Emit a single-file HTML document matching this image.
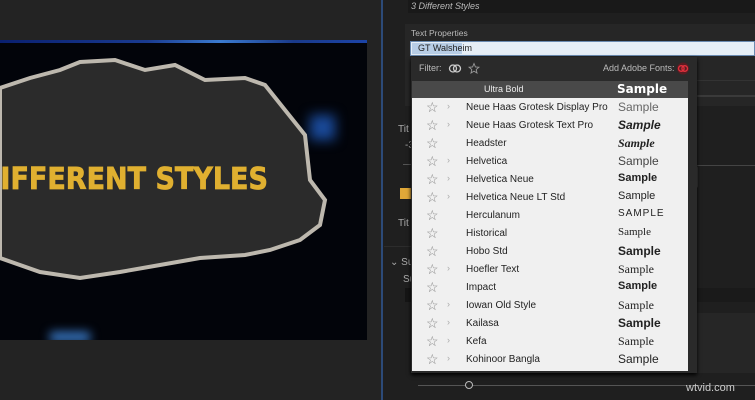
<!DOCTYPE html>
<html><head><style>
body{margin:0;width:755px;height:400px;overflow:hidden;background:#232323;font-family:"Liberation Sans",sans-serif;position:relative}
.a{position:absolute}
.row{position:absolute;left:0;width:276px;height:18px;font-size:10px;color:#222}
.row .st{position:absolute;left:14px;top:2px;font-size:14px;color:#888;line-height:14px}
.row .ch{position:absolute;left:35px;top:3px;color:#aaa;font-size:9px}
.row .nm{position:absolute;left:54px;top:4px}
.row .sm{position:absolute;left:206px;top:2px;font-size:12px;color:#222}
.g{color:#aaa;font-size:10px}
</style></head><body>
<div class="a" style="left:0;top:40px;width:367px;height:300px;background:#02040a;overflow:hidden">
 <div class="a" style="left:0;top:0;width:367px;height:3px;background:linear-gradient(90deg,#0a2070,#1a3b90 40%,#3b7bd0 60%,#1a3a8a 80%,#1c44a8)"></div>
 <div class="a" style="left:310px;top:75px;width:25px;height:25px;background:#1a4a9a;filter:blur(6px)"></div>
 <div class="a" style="left:50px;top:292px;width:40px;height:10px;background:#3a7ac8;filter:blur(5px)"></div>
 <svg class="a" style="left:0;top:0" width="367" height="300">
  <path d="M0,48 L30,38 L60,30 L80,22 L115,20 L145,30 L175,25 L205,40 L245,38 L265,45 L285,70 L305,95 L310,140 L325,160 L320,185 L300,200 L270,210 L245,215 L200,218 L160,225 L120,232 L80,238 L40,232 L0,218 Z" fill="#2b2b2b" stroke="#bdb8ae" stroke-width="4"/>
 </svg>
 <div class="a" style="left:-22px;top:122px;font-size:30px;font-weight:900;color:#e0b030;white-space:nowrap;font-family:'DejaVu Sans',sans-serif;transform:scaleX(0.9);transform-origin:left;-webkit-text-stroke:0.8px #e0b030">DIFFERENT STYLES</div>
</div>
<div class="a" style="left:381px;top:0;width:2px;height:400px;background:#2c4a78"></div>
<div class="a" style="left:383px;top:0;width:372px;height:400px;background:#1f1f1f"></div>
<div class="a" style="left:408px;top:0;width:347px;height:13px;background:#191919"></div>
<div class="a" style="left:411px;top:1px;font-size:9px;font-style:italic;color:#bbb">3 Different Styles</div>
<div class="a" style="left:405px;top:24px;width:350px;height:82px;background:#262626"></div>
<div class="a" style="left:411px;top:28px;font-size:8.5px;color:#bbb">Text Properties</div>
<div class="a" style="left:410px;top:41px;width:345px;height:15px;background:#e6eef6;border:1px solid #6a8ab0;box-sizing:border-box"></div>
<div class="a" style="left:412px;top:43px;width:50px;height:11px;background:#b7cde6"></div>
<div class="a" style="left:418px;top:43px;font-size:9px;color:#222">GT Walsheim</div>
<div class="a g" style="left:398px;top:124px">Tit</div>
<div class="a g" style="left:405px;top:140px">-3</div>
<div class="a" style="left:403px;top:164px;width:10px;height:1px;background:#555"></div>
<div class="a" style="left:400px;top:188px;width:12px;height:11px;background:#e0a838"></div>
<div class="a g" style="left:398px;top:218px">Tit</div>
<div class="a" style="left:384px;top:246px;width:30px;height:1px;background:#2c2c2c"></div>
<div class="a g" style="left:390px;top:257px">⌄ Su</div>
<div class="a g" style="left:403px;top:274px">Su</div>
<div class="a" style="left:405px;top:288px;width:10px;height:14px;background:#151515"></div>
<div class="a" style="left:418px;top:313px;width:337px;height:60px;background:#262626"></div>
<div class="a" style="left:697px;top:80px;width:58px;height:1px;background:#333"></div>
<div class="a" style="left:697px;top:95px;width:58px;height:2px;background:#3a3a3a"></div>
<div class="a" style="left:697px;top:165px;width:58px;height:1px;background:#444"></div>
<div class="a" style="left:693px;top:166px;width:5px;height:22px;background:#3d3d3d;border-radius:2px"></div>
<div class="a" style="left:697px;top:288px;width:58px;height:14px;background:#1a1a1a"></div>
<div class="a" style="left:411px;top:57px;width:286px;height:316px;background:#2a2a2a;box-shadow:0 2px 4px #000"></div>
<div class="a" style="left:419px;top:63px;font-size:9px;color:#bbb">Filter:</div>
<svg class="a" style="left:448px;top:62px" width="32" height="13"><circle cx="5" cy="6.5" r="3.5" fill="none" stroke="#ccc" stroke-width="1.3"/><circle cx="9" cy="6.5" r="3.5" fill="none" stroke="#ccc" stroke-width="1.3"/><path d="M26 1.5l1.4 3.4 3.5.3-2.7 2.3.8 3.5-3-1.9-3 1.9.8-3.5-2.7-2.3 3.5-.3z" fill="none" stroke="#999" stroke-width="0.9"/></svg>
<div class="a" style="left:603px;top:63px;font-size:9px;color:#bbb">Add Adobe Fonts:</div>
<svg class="a" style="left:676px;top:62px" width="14" height="13"><circle cx="7" cy="6.5" r="6" fill="#5a1c22"/><circle cx="5.3" cy="6.5" r="2.8" fill="none" stroke="#e0303c" stroke-width="1.3"/><circle cx="8.7" cy="6.5" r="2.8" fill="none" stroke="#e0303c" stroke-width="1.3"/></svg>
<div class="a" style="left:412px;top:81px;width:276px;height:17px;background:#494949"></div>
<div class="a" style="left:484px;top:84px;font-size:9px;color:#eee">Ultra Bold</div>
<div class="a" style="left:617px;top:82px;font-size:12px;font-weight:900;color:#fff;font-family:'DejaVu Sans',sans-serif">Sample</div>
<div class="a" style="left:412px;top:98px;width:276px;height:273px;background:#f0f0f0">
 <div class="row" style="top:0"><span class="st">☆</span><span class="ch">›</span><span class="nm">Neue Haas Grotesk Display Pro</span><span class="sm" style="color:#666;font-weight:300">Sample</span></div>
 <div class="row" style="top:18px"><span class="st">☆</span><span class="ch">›</span><span class="nm">Neue Haas Grotesk Text Pro</span><span class="sm" style="font-weight:bold;font-style:italic">Sample</span></div>
 <div class="row" style="top:36px"><span class="st">☆</span><span class="nm">Headster</span><span class="sm" style="font-family:'Liberation Serif';font-style:italic;font-weight:bold">Sample</span></div>
 <div class="row" style="top:54px"><span class="st">☆</span><span class="ch">›</span><span class="nm">Helvetica</span><span class="sm" style="color:#444">Sample</span></div>
 <div class="row" style="top:72px"><span class="st">☆</span><span class="ch">›</span><span class="nm">Helvetica Neue</span><span class="sm" style="font-weight:bold;font-size:11px">Sample</span></div>
 <div class="row" style="top:90px"><span class="st">☆</span><span class="ch">›</span><span class="nm">Helvetica Neue LT Std</span><span class="sm" style="font-size:11px">Sample</span></div>
 <div class="row" style="top:108px"><span class="st">☆</span><span class="nm">Herculanum</span><span class="sm" style="font-size:10px;letter-spacing:1px">SAMPLE</span></div>
 <div class="row" style="top:126px"><span class="st">☆</span><span class="nm">Historical</span><span class="sm" style="font-family:'Liberation Serif';font-size:11px">Sample</span></div>
 <div class="row" style="top:144px"><span class="st">☆</span><span class="nm">Hobo Std</span><span class="sm" style="font-weight:bold">Sample</span></div>
 <div class="row" style="top:162px"><span class="st">☆</span><span class="ch">›</span><span class="nm">Hoefler Text</span><span class="sm" style="font-family:'Liberation Serif'">Sample</span></div>
 <div class="row" style="top:180px"><span class="st">☆</span><span class="nm">Impact</span><span class="sm" style="font-weight:900;font-size:11px">Sample</span></div>
 <div class="row" style="top:198px"><span class="st">☆</span><span class="ch">›</span><span class="nm">Iowan Old Style</span><span class="sm" style="font-family:'Liberation Serif'">Sample</span></div>
 <div class="row" style="top:216px"><span class="st">☆</span><span class="ch">›</span><span class="nm">Kailasa</span><span class="sm" style="font-weight:bold">Sample</span></div>
 <div class="row" style="top:234px"><span class="st">☆</span><span class="ch">›</span><span class="nm">Kefa</span><span class="sm" style="font-family:'Liberation Serif'">Sample</span></div>
 <div class="row" style="top:252px"><span class="st">☆</span><span class="ch">›</span><span class="nm">Kohinoor Bangla</span><span class="sm">Sample</span></div>
</div>
<div class="a" style="left:418px;top:385px;width:337px;height:1px;background:#555"></div>
<div class="a" style="left:465px;top:381px;width:6px;height:6px;border:1.5px solid #bbb;border-radius:50%;background:#222"></div>
<div class="a" style="left:686px;top:382px;font-size:11px;color:#ccc">wtvid.com</div>
</body></html>
